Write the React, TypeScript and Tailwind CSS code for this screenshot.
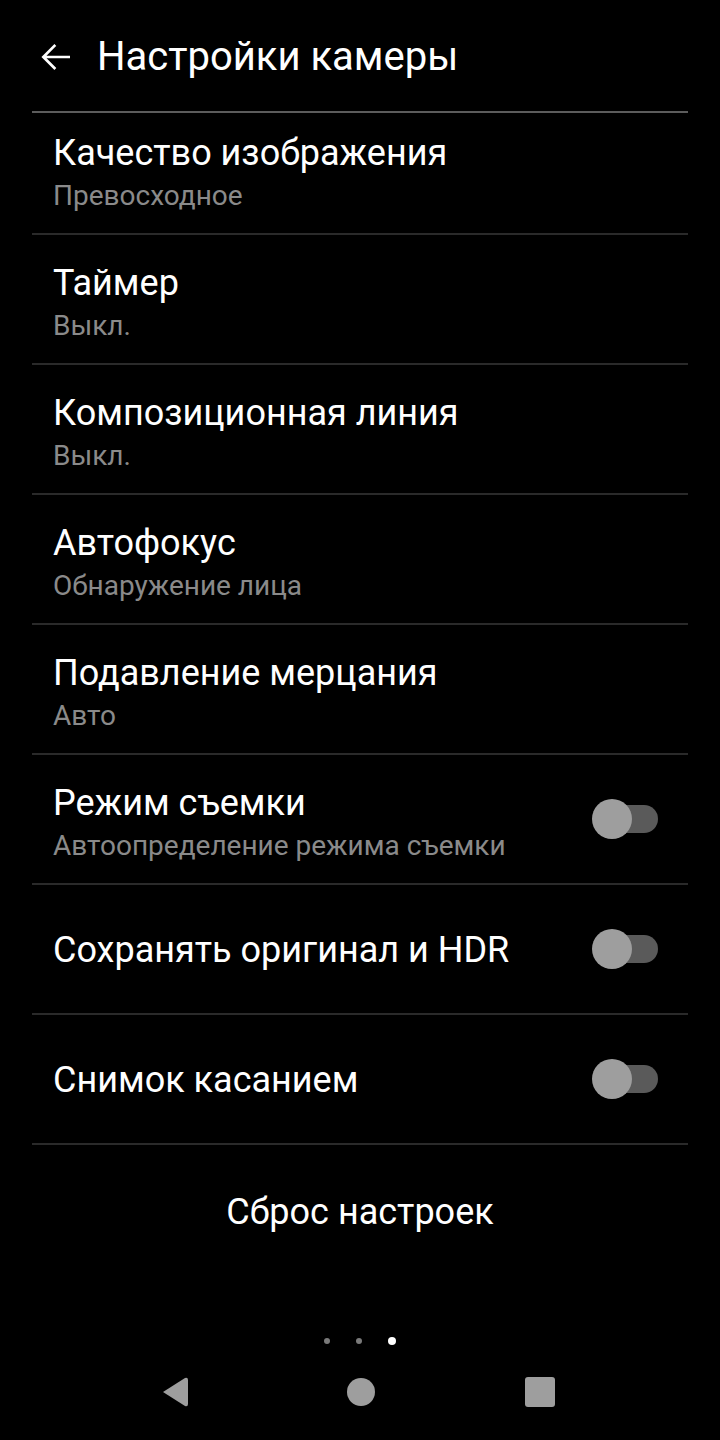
const rows: { title: string; sub?: string; toggle?: boolean }[] = [
  { title: "Качество изображения", sub: "Превосходное" },
  { title: "Таймер", sub: "Выкл." },
  { title: "Композиционная линия", sub: "Выкл." },
  { title: "Автофокус", sub: "Обнаружение лица" },
  { title: "Подавление мерцания", sub: "Авто" },
  { title: "Режим съемки", sub: "Автоопределение режима съемки", toggle: true },
  { title: "Сохранять оригинал и HDR", toggle: true },
  { title: "Снимок касанием", toggle: true },
];

function Toggle() {
  return (
    <div className="relative w-[66px] h-[40px] mr-[30px] self-center flex items-center">
      <div className="absolute left-[10px] right-0 h-[28px] rounded-full bg-[#5a5a5a]" />
      <div className="absolute left-0 w-[40px] h-[40px] rounded-full bg-[#9e9e9e]" />
    </div>
  );
}

export default function App() {
  return (
    <div className="w-[720px] h-[1440px] bg-black flex flex-col font-['Roboto','Liberation_Sans',sans-serif]">
      {/* Header */}
      <div className="h-[113px] flex items-center mx-[32px] border-b-2 border-[#5c5c5c]">
        <svg width="38" height="38" viewBox="0 0 24 24" className="ml-[5px] mt-[2px]" fill="none" stroke="white" strokeWidth="1.7" strokeLinecap="square">
          <path d="M20 12H5M11 5l-7 7 7 7" />
        </svg>
        <h1 className="ml-[22px] mt-[3px] text-white text-[40px] leading-none">Настройки камеры</h1>
      </div>

      {/* Settings list */}
      <div className="mx-[32px] flex flex-col">
        {rows.map((row, i) => (
          <div
            key={row.title}
            className={`flex justify-between border-b-2 border-[#2a2a2a] ${i === 0 ? "h-[122px]" : "h-[130px]"}`}
          >
            <div
              className={`pl-[21px] flex flex-col ${
                row.sub ? (i === 0 ? "self-start pt-[20px]" : "self-start pt-[28px]") : "self-center mt-[2px]"
              }`}
            >
              <span className="text-white text-[36px] leading-[40px]">{row.title}</span>
              {row.sub && <span className="text-[#8a8a8a] text-[28px] leading-[32px] mt-[7px]">{row.sub}</span>}
            </div>
            {row.toggle && <Toggle />}
          </div>
        ))}
      </div>

      <div className="h-[134px] flex items-center justify-center">
        <span className="text-white text-[36px]">Сброс настроек</span>
      </div>

      {/* Page dots */}
      <div className="mt-[58px] flex items-center justify-center gap-[26px]">
        <div className="w-[6px] h-[6px] rounded-full bg-[#7a7a7a]" />
        <div className="w-[6px] h-[6px] rounded-full bg-[#7a7a7a]" />
        <div className="w-[8px] h-[8px] rounded-full bg-white" />
      </div>

      {/* Nav bar */}
      <div className="mt-[30px] flex items-center justify-center gap-[150px]">
        <svg width="32" height="34" viewBox="0 0 32 34" className="-ml-[6px] mr-[6px]">
          <path d="M4 17 L26 3 Q29 2 29 5 L29 29 Q29 32 26 31 Z" fill="#9e9e9e" />
        </svg>
        <div className="w-[28px] h-[28px] rounded-full bg-[#9e9e9e]" />
        <div className="w-[30px] h-[30px] rounded-[3px] bg-[#9e9e9e]" />
      </div>
    </div>
  );
}
